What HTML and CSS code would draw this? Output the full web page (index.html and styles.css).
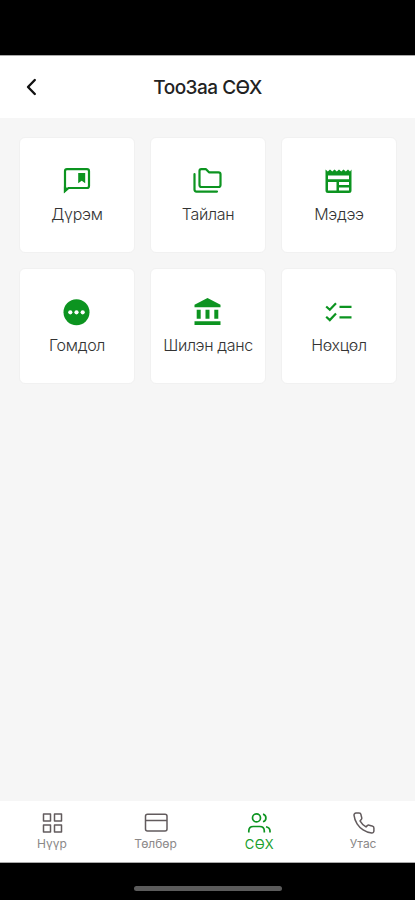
FILE: index.html
```html
<!DOCTYPE html>
<html lang="mn">
<head>
<meta charset="utf-8">
<meta name="viewport" content="width=device-width, initial-scale=1">
<title>ТооЗаа СӨХ</title>
<link rel="stylesheet" href="styles.css">
</head>
<body>
<div class="status-bar"></div>
<header class="header">
  <svg class="back" viewBox="0 0 24 24"><path d="M14.8 5 8 12l6.800 7"/></svg>
  <h1 class="title">ТооЗаа СӨХ</h1>
</header>
<main class="grid">
  <a class="card">
    <svg class="icon" viewBox="0 0 32 32"><path class="line" d="M4 26V6.200Q4 4.200 6 4.200H26Q28 4.200 28 6.200V21Q28 23 26 23H7.500Z"/><path class="solid" d="M2.900 28V21.500L8 23.500ZM17.200 8H24.200V18.300L20.700 15.800L17.200 18.300Z"/></svg>
    <span class="label">Дүрэм</span>
  </a>
  <a class="card">
    <svg class="icon" viewBox="0 0 32 32"><path class="line round" d="M7.500 6Q7.500 4.200 9.300 4.200H14L17 7.300H26.500Q28.500 7.300 28.500 9.300V20Q28.500 22 26.500 22H9.500Q7.500 22 7.500 20ZM2.500 9.200V24.600Q2.500 26.600 4.500 26.600H25"/></svg>
    <span class="label">Тайлан</span>
  </a>
  <a class="card">
    <svg class="icon" viewBox="0 0 32 32"><path class="solid" fill-rule="evenodd" d="M2.500 4.500 4.800 6.500 7 4.500 9.300 6.500 11.500 4.500 13.800 6.500 16 4.500 18.300 6.500 20.500 4.500 22.800 6.500 25 4.500 27 6.500 28.500 4.500V25.500Q28.500 28 26 28H5Q2.500 28 2.500 25.500ZM5 10.500V14.300H26V10.500ZM5 17V25.500H13.500V17ZM16 17V20H26V17ZM16 22.500V25.500H26V22.500Z"/></svg>
    <span class="label">Мэдээ</span>
  </a>
  <a class="card">
    <svg class="icon" viewBox="0 0 32 32"><circle class="solid" cx="15.500" cy="16.300" r="13"/><g class="dots"><circle cx="9.300" cy="16.300" r="2.100"/><circle cx="15.500" cy="16.300" r="2.100"/><circle cx="21.700" cy="16.300" r="2.100"/></g></svg>
    <span class="label">Гомдол</span>
  </a>
  <a class="card">
    <svg class="icon" viewBox="0 0 32 32"><path class="solid" d="M15.500 2 28.500 8.700V11.200H2.500V8.700ZM4.700 13.700H8.700V22.800H4.700ZM13.500 13.700H17.500V22.800H13.500ZM22.300 13.700H26.300V22.800H22.300ZM2.500 25.300H28.500V29H2.500Z"/></svg>
    <span class="label tight">Шилэн данс</span>
  </a>
  <a class="card">
    <svg class="icon" viewBox="0 0 32 32"><path class="line" d="M3.200 10.500 6.800 13.800 13 7.300M3.200 20.800 6.800 24.100 13 17.600M16.500 10.800H28.500M16.500 21.300H28.500"/></svg>
    <span class="label">Нөхцөл</span>
  </a>
</main>
<nav class="nav">
  <a class="tab">
    <svg class="tab-icon" viewBox="0 0 24 24"><path d="M3.500 3h7v7h-7ZM14.500 3h7v7h-7ZM3.500 14h7v7h-7ZM14.500 14h7v7h-7Z"/></svg>
    <span class="tab-label">Нүүр</span>
  </a>
  <a class="tab">
    <svg class="tab-icon" viewBox="0 0 24 24"><rect x="1.500" y="3.300" width="21.500" height="16.700" rx="2"/><path d="M1.500 9.500H23"/></svg>
    <span class="tab-label">Төлбөр</span>
  </a>
  <a class="tab active">
    <svg class="tab-icon" viewBox="0 0 24 24"><circle cx="9.500" cy="6.900" r="4"/><path d="M1.800 21.500v-1.500q0-4.500 4.500-4.500h6.500q4.500 0 4.500 4.500v1.500M16 3.100a4 4 0 0 1 0 7.700M19 15.800q4 1 4 4.200v1.500"/></svg>
    <span class="tab-label">СӨХ</span>
  </a>
  <a class="tab">
    <svg class="tab-icon" viewBox="0 0 24 24"><path d="M22.900 17v3a2 2 0 0 1-2.200 2 19.800 19.800 0 0 1-8.600-3.100 19.500 19.500 0 0 1-6-6A19.800 19.800 0 0 1 3 4.200 2 2 0 0 1 5 2h3a2 2 0 0 1 2 1.700c.1 1 .4 1.900.7 2.800a2 2 0 0 1-.5 2.100L9 9.900a16 16 0 0 0 6 6l1.300-1.300a2 2 0 0 1 2.100-.4c.9.300 1.800.6 2.800.7A2 2 0 0 1 22.900 17Z"/></svg>
    <span class="tab-label">Утас</span>
  </a>
</nav>
<footer class="system-bar"><div class="handle"></div></footer>
</body>
</html>
```
FILE: styles.css
```css
* { box-sizing: border-box; }
body {
  margin: 0;
  height: 900px;
  display: flex;
  flex-direction: column;
  overflow: hidden;
  background: #f6f6f6;
  font-family: Inter, "Liberation Sans", sans-serif;
}
.status-bar { height: 55px; background: #000; flex: none; }
.header {
  height: 63px;
  flex: none;
  display: grid;
  grid-template-columns: 62px 1fr 62px;
  align-items: center;
  background: #fff;
  border-top: 1px solid #aaa;
}
.back {
  width: 24px;
  height: 24px;
  margin-left: 20px;
  fill: none;
  stroke: #111;
  stroke-width: 2.4;
  stroke-linecap: round;
  stroke-linejoin: round;
}
.title {
  margin: 0;
  padding-top: 2px;
  text-align: center;
  font-size: 19px;
  line-height: 24px;
  font-weight: 500;
  letter-spacing: -0.5px;
  color: #222;
  white-space: nowrap;
}
.grid {
  flex: 1;
  display: grid;
  grid-template-columns: repeat(3, 116px);
  grid-auto-rows: 116px;
  gap: 15px;
  align-content: start;
  padding: 19px 17px 0 19px;
}
.card {
  display: flex;
  flex-direction: column;
  align-items: center;
  padding-top: 27px;
  background: #fff;
  border: 1px solid #f1f1f1;
  border-radius: 6px;
}
.icon { width: 32px; height: 32px; flex: none; }
.line { fill: none; stroke: #0c9420; stroke-width: 2.2; }
.round { stroke-linecap: round; stroke-linejoin: round; }
.solid { fill: #0c9420; }
.dots { fill: #fff; }
.label {
  margin-top: 7px;
  font-size: 16px;
  line-height: 20px;
  font-weight: 300;
  letter-spacing: -0.3px;
  color: #333;
  white-space: nowrap;
}
.tight { letter-spacing: -0.35px; }
.nav {
  height: 62px;
  flex: none;
  display: grid;
  grid-template-columns: repeat(4, 1fr);
  background: #fff;
  border-bottom: 1px solid #aaa;
}
.tab {
  display: flex;
  flex-direction: column;
  align-items: center;
  padding-top: 10px;
  color: #8b8888;
}
.tab-icon {
  width: 24px;
  height: 24px;
  flex: none;
  fill: none;
  stroke: #625b5d;
  stroke-width: 1.5;
  stroke-linejoin: round;
}
.tab-label { margin-top: 1px; font-size: 12px; line-height: 16px; font-weight: 400; }
.active { color: #19a02c; }
.active .tab-icon { stroke: #0c9420; stroke-width: 1.7; }
.active .tab-label { font-size: 13px; letter-spacing: 0.4px; }
.system-bar {
  height: 37px;
  flex: none;
  display: flex;
  justify-content: center;
  padding-top: 23px;
  background: #000;
}
.handle { width: 148px; height: 5px; border-radius: 3px; background: #5b5b5b; }
```
